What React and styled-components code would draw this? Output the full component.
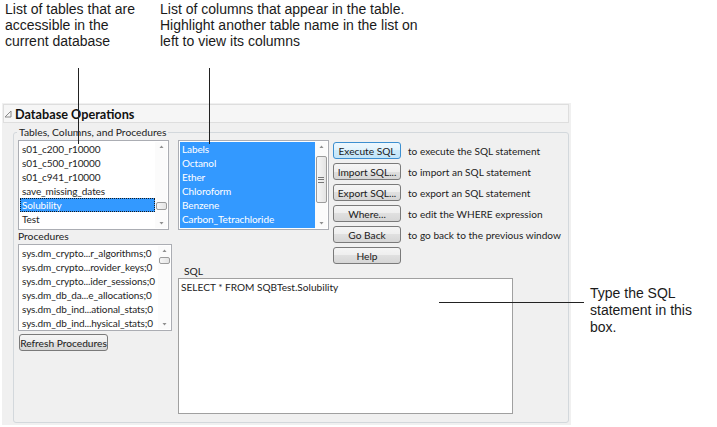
import styled, { createGlobalStyle, css } from "styled-components";

const GlobalStyle = createGlobalStyle`
  body {
    margin: 0;
    background: #fff;
  }
  * {
    box-sizing: border-box;
  }
`;

const tables = [
  "s01_c200_r10000",
  "s01_c500_r10000",
  "s01_c941_r10000",
  "save_missing_dates",
  "Solubility",
  "Test",
];

const columns = [
  "Labels",
  "Octanol",
  "Ether",
  "Chloroform",
  "Benzene",
  "Carbon_Tetrachloride",
];

const procedures = [
  "sys.dm_crypto...r_algorithms;0",
  "sys.dm_crypto...rovider_keys;0",
  "sys.dm_crypto...ider_sessions;0",
  "sys.dm_db_da...e_allocations;0",
  "sys.dm_db_ind...ational_stats;0",
  "sys.dm_db_ind...hysical_stats;0",
];

const actions = [
  { label: "Execute SQL", text: "to execute the SQL statement", primary: true },
  { label: "Import SQL...", text: "to import an SQL statement" },
  { label: "Export SQL...", text: "to export an SQL statement" },
  { label: "Where...", text: "to edit the WHERE expression" },
  { label: "Go Back", text: "to go back to the previous window" },
  { label: "Help", text: "" },
];

// 작은 스크롤바 화살표
const Arrow = ({ down }) => (
  <svg width="7" height="5" viewBox="0 0 7 5">
    <path d={down ? "M1.5 1 L5.5 1 L3.5 3.5 Z" : "M1.5 4 L5.5 4 L3.5 1.5 Z"} fill="#8f8f8f" />
  </svg>
);

const ListBox = ({ items, selected, allSelected, width, height, thumbTop, thumbHeight }) => (
  <ListFrame $w={width} $h={height}>
    <Rows $allSelected={allSelected}>
      {items.map((item, i) => (
        <Row key={item} $selected={allSelected || i === selected} $focus={i === selected}>
          {item}
        </Row>
      ))}
    </Rows>
    <Scrollbar>
      <Arrow />
      <Track>
        <Thumb $top={thumbTop} $h={thumbHeight}>
          {thumbHeight > 20 && <Grip />}
        </Thumb>
      </Track>
      <Arrow down />
    </Scrollbar>
  </ListFrame>
);

export default function App() {
  return (
    <Page>
      <GlobalStyle />
      <Notes>
        <Note $left={5} $width={150}>
          List of tables that are
          <br />
          accessible in the
          <br />
          current database
        </Note>
        <Note $left={5} $width={320}>
          List of columns that appear in the table.
          <br />
          Highlight another table name in the list on
          <br />
          left to view its columns
        </Note>
      </Notes>

      <Main>
        <Window>
          <Header>
            <svg width="8" height="8" viewBox="0 0 8 8">
              <path d="M7 1 L7 7 L1 7 Z" fill="none" stroke="#8a8a8a" strokeWidth="1" />
            </svg>
            Database Operations
          </Header>

          <GroupBox>
            <Legend>Tables, Columns, and Procedures</Legend>
            <Body>
              <LeftCol>
                <ListBox
                  items={tables}
                  selected={4}
                  width={151}
                  height={90}
                  thumbTop={53}
                  thumbHeight={8}
                />
                <Caption>Procedures</Caption>
                <ListBox
                  items={procedures}
                  width={154}
                  height={87}
                  thumbTop={4}
                  thumbHeight={7}
                />
                <Button $small>Refresh Procedures</Button>
              </LeftCol>

              <RightCol>
                <TopRow>
                  <ListBox
                    items={columns}
                    allSelected
                    width={151}
                    height={90}
                    thumbTop={7}
                    thumbHeight={47}
                  />
                  <ActionGrid>
                    {actions.map((a) => (
                      <ActionRow key={a.label}>
                        <Button $primary={a.primary}>{a.label}</Button>
                        <ActionText>{a.text}</ActionText>
                      </ActionRow>
                    ))}
                  </ActionGrid>
                </TopRow>
                <SqlLabel>SQL</SqlLabel>
                <SqlBox>SELECT * FROM SQBTest.Solubility</SqlBox>
              </RightCol>
            </Body>
          </GroupBox>
        </Window>

        <SideNote>
          Type the SQL
          <br />
          statement in this
          <br />
          box.
        </SideNote>
      </Main>

      {/* 설명선 */}
      <VLine $left={78} />
      <VLine $left={209} />
      <HLine />
    </Page>
  );
}

const Page = styled.div`
  position: relative;
  width: 717px;
  height: 427px;
  overflow: hidden;
  font-family: "Lato", "Liberation Sans", sans-serif;
  color: #1e1e1e;
`;

const Notes = styled.div`
  display: flex;
  height: 103px;
  padding-top: 1px;
  font-family: "Liberation Sans", Arial, sans-serif;
  font-size: 14px;
  line-height: 16px;
  color: #1a1a1a;
`;

const Note = styled.p`
  margin: 0 0 0 ${({ $left }) => $left}px;
  width: ${({ $width }) => $width}px;
  white-space: nowrap;
`;

const Main = styled.div`
  display: flex;
  align-items: flex-start;
`;

const Window = styled.section`
  margin-left: 2px;
  width: 569px;
  height: 322px;
  background: #f0f0f0;
  padding: 1px 2px 0 1px;
`;

const Header = styled.div`
  height: 19px;
  display: flex;
  align-items: center;
  gap: 3px;
  border: 1px solid #dedede;
  background: #f6f6f6;
  font-size: 12.7px;
  font-weight: 700;
  color: #111;
`;

const GroupBox = styled.fieldset`
  margin: 3px 0 0 10px;
  width: 556px;
  height: 297px;
  min-width: 0;
  padding: 1px 0 0 4px;
  border: 1px solid #d3d8dc;
  border-radius: 3px;
`;

const Legend = styled.legend`
  padding: 0 2px;
  margin-left: -1px;
  font-size: 10.3px;
  line-height: 13px;
  color: #222;
`;

const Body = styled.div`
  display: flex;
  gap: 6px;
`;

const LeftCol = styled.div`
  display: flex;
  flex-direction: column;
  width: 154px;
`;

const RightCol = styled.div`
  display: flex;
  flex-direction: column;
`;

const TopRow = styled.div`
  display: flex;
  gap: 4px;
  height: 124px;
`;

const ListFrame = styled.div`
  display: flex;
  width: ${({ $w }) => $w}px;
  height: ${({ $h }) => $h}px;
  background: #fff;
  border: 1px solid #abadb3;
  padding: 1px;
`;

const Rows = styled.div`
  flex: 1;
  min-width: 0;
  background: ${({ $allSelected }) => ($allSelected ? "#3399ff" : "#fff")};
`;

const Row = styled.div`
  height: 14px;
  line-height: 15px;
  padding-left: 2px;
  font-size: 10px;
  letter-spacing: -0.1px;
  white-space: nowrap;
  overflow: hidden;
  color: #1e1e1e;

  ${({ $selected }) =>
    $selected &&
    css`
      background: #3399ff;
      color: #fff;
    `}

  ${({ $focus }) =>
    $focus &&
    css`
      outline: 1px dotted #1a1a1a;
      outline-offset: -1px;
    `}
`;

const Scrollbar = styled.div`
  width: 12px;
  display: flex;
  flex-direction: column;
  align-items: center;
  padding: 2px 0;
  background: #fbfbfb;
`;

const Track = styled.div`
  flex: 1;
  width: 100%;
  display: flex;
  flex-direction: column;
  align-items: center;
`;

const Thumb = styled.div`
  margin-top: ${({ $top }) => $top}px;
  width: 11px;
  height: ${({ $h }) => $h}px;
  border: 1px solid #9c9c9c;
  border-radius: 2px;
  background: linear-gradient(to right, #f6f6f6, #e4e4e4);
  display: flex;
  align-items: center;
  justify-content: center;
`;

const Grip = styled.span`
  width: 6px;
  height: 6px;
  border-top: 1px solid #777;
  border-bottom: 1px solid #777;
  position: relative;

  &::after {
    content: "";
    position: absolute;
    left: 0;
    right: 0;
    top: 1.5px;
    border-top: 1px solid #777;
  }
`;

const Caption = styled.div`
  height: 14px;
  line-height: 13px;
  font-size: 10.3px;
  color: #222;
`;

const Button = styled.button`
  height: 17px;
  padding: 0;
  border: 1px solid #7a7a7a;
  border-radius: 3px;
  font-family: "Lato", "Liberation Sans", sans-serif;
  font-size: 10.2px;
  line-height: 14px;
  color: #1a1a1a;
  white-space: nowrap;
  background: linear-gradient(#f5f5f5 0%, #eeeeee 50%, #e0e0e0 50%, #d6d6d6 100%);

  ${({ $small }) =>
    $small &&
    css`
      margin: 3px 0 0 1px;
      width: 89px;
    `}

  ${({ $primary }) =>
    $primary &&
    css`
      border-color: #3c8fd0;
      background: linear-gradient(#eef8fe 0%, #e0f2fc 50%, #cdebfb 50%, #c2e5f9 100%);
    `}
`;

const ActionGrid = styled.div`
  display: flex;
  flex-direction: column;
  gap: 4px;
  padding-top: 2px;
`;

const ActionRow = styled.div`
  display: grid;
  grid-template-columns: 68px auto;
  column-gap: 7px;
  align-items: center;
`;

const ActionText = styled.span`
  font-size: 10.1px;
  color: #222;
  white-space: nowrap;
`;

const SqlLabel = styled.div`
  height: 14px;
  padding-left: 6px;
  line-height: 14px;
  font-size: 10.3px;
  color: #222;
`;

const SqlBox = styled.div`
  width: 335px;
  height: 136px;
  background: #fff;
  border: 1px solid #a0a0a0;
  padding: 1px 2px;
  font-size: 10.1px;
  line-height: 14px;
  color: #222;
`;

const SideNote = styled.p`
  margin: 182px 0 0 19px;
  font-family: "Liberation Sans", Arial, sans-serif;
  font-size: 14px;
  line-height: 17px;
  color: #1a1a1a;
  white-space: nowrap;
`;

const VLine = styled.div`
  position: absolute;
  left: ${({ $left }) => $left}px;
  top: 68px;
  width: 1px;
  height: 76px;
  background: #222;
`;

const HLine = styled.div`
  position: absolute;
  left: 439px;
  top: 302px;
  width: 145px;
  height: 1px;
  background: #222;
`;
